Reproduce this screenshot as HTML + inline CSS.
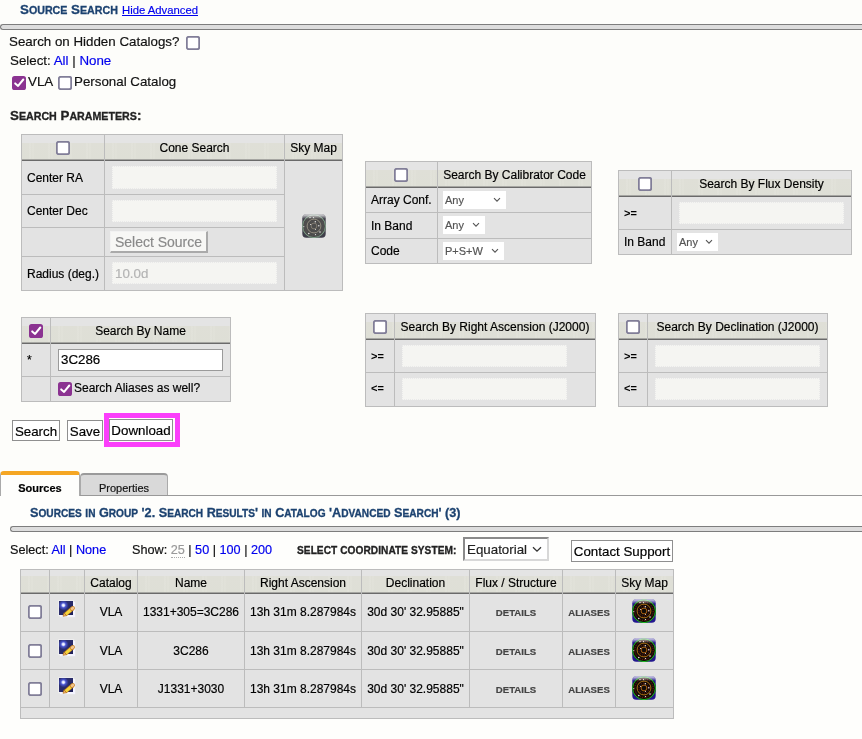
<!DOCTYPE html>
<html>
<head>
<meta charset="utf-8">
<title>Source Search</title>
<style>
html,body{margin:0;padding:0;}
body{width:862px;height:739px;overflow:hidden;background:#fdfdfa;font-family:"Liberation Sans",Arial,Helvetica,sans-serif;font-size:13.33px;color:#111;position:relative;-webkit-text-stroke:0.18px;}
a{color:#0000ee;text-decoration:none;}
.abs{position:absolute;white-space:nowrap;}
.sc{font-weight:bold;-webkit-text-stroke:0.3px;}
.sc small{font-size:80%;}
.h1{color:#1c4270;font-size:13.33px;}
.hr{position:absolute;height:4px;border:1px solid #7d7d7d;background:#dddddd;border-radius:4px 0 0 4px;border-right:none;}
.cb{position:absolute;box-sizing:border-box;width:14px;height:14px;border:1.6px solid #817e98;border-radius:2.6px;background:#fff;}
.cb.on{background:#8b3391;border:none;}
.cb.on svg{position:absolute;left:0;top:0;}
table.t{position:absolute;border-collapse:separate;border-spacing:0;table-layout:fixed;font-size:12px;border-top:1px solid #bcbcbc;border-left:1px solid #bcbcbc;color:#000;}
table.t td,table.t th{box-sizing:border-box;border-right:1px solid #bcbcbc;border-bottom:1px solid #bcbcbc;padding:0;font-weight:normal;background:#e3e3e3;position:relative;overflow:visible;white-space:nowrap;}
table.t th{height:26px;padding-top:1px;padding-bottom:2px;border-bottom:none;text-align:center;background:linear-gradient(to top,#6a6a6a 0,#6a6a6a 1px,#a6a6a2 1px,#a6a6a2 2px,rgba(0,0,0,0) 2px),repeating-linear-gradient(90deg,rgba(255,255,255,0) 0,rgba(255,255,255,0) 7px,rgba(255,255,255,.16) 8px,rgba(255,255,255,0) 9px,rgba(255,255,255,0) 10px,rgba(255,255,255,.12) 11px,rgba(255,255,255,0) 12px,rgba(255,255,255,0) 19px) 0 100%/100% 18px no-repeat,linear-gradient(to top,#dedfd6 0,#dfdfd7 18px,#e4e4e4 18px);}
table.t tr.rh th{height:24px;padding-top:4px;}
table.t td.l{text-align:left;padding-left:5px;}
table.t td.c{text-align:center;padding-bottom:2px;}
table.t tr.r1 td.c,table.t tr.r2 td.c{padding-bottom:0;}
table.t tr.r1 td.lk,table.t tr.r2 td.lk{padding-top:2px;}
table.t td.op{font-weight:bold;font-size:11px;padding-left:5px;padding-bottom:1px;-webkit-text-stroke:0;}
table.t td.op2{padding-bottom:3px;}
table.t td.lk{text-align:center;font-weight:bold;font-size:9.6px;color:#444;}
.in{position:absolute;box-sizing:border-box;border:1px dotted #e9e9e9;background:#f5f5f2;height:22px;}
.sel{position:absolute;box-sizing:border-box;background:#fff;font-size:11px;line-height:18px;height:18px;color:#555;padding-left:2px;}
.sel svg{position:absolute;right:5px;top:6px;}
.btn{position:absolute;box-sizing:border-box;border:1px solid #8f8f8f;background:#fff;color:#000;font-size:13.33px;text-align:center;height:21px;line-height:21px;}
.tab{position:absolute;box-sizing:border-box;font-size:11px;text-align:center;}
</style>
</head>
<body>
<div id="w" style="position:absolute;left:0;top:0;width:862px;height:739px;will-change:transform;">

<div class="abs sc h1" style="left:20px;top:2px;">S<small>OURCE</small> S<small>EARCH</small></div>
<a class="abs" style="left:122px;top:4px;font-size:11.3px;text-decoration:underline;">Hide Advanced</a>
<div class="hr" style="left:0;top:24px;width:862px;"></div>
<div class="abs" style="left:9px;top:34px;">Search on Hidden Catalogs?</div>
<svg class="abs" style="left:186px;top:36px;" width="14" height="14" viewBox="0 0 14 14"><rect x="0.8" y="0.8" width="12.4" height="12.4" rx="2" fill="#fff" stroke="#817e98" stroke-width="1.9"/></svg>
<div class="abs" style="left:10px;top:53px;">Select: <a>All</a> | <a>None</a></div>
<span class="cb on" style="left:12px;top:76px;"><svg width="14" height="14" viewBox="0 0 14 14"><path d="M3.2 7.4 L6.1 9.9 L11.3 3.5" fill="none" stroke="#fff" stroke-width="2" stroke-linecap="round" stroke-linejoin="round"/></svg></span>
<div class="abs" style="left:28px;top:74px;">VLA</div>
<svg class="abs" style="left:58px;top:76px;" width="14" height="14" viewBox="0 0 14 14"><rect x="0.8" y="0.8" width="12.4" height="12.4" rx="2" fill="#fff" stroke="#817e98" stroke-width="1.9"/></svg>
<div class="abs" style="left:74px;top:74px;">Personal Catalog</div>
<div class="abs sc" style="left:10px;top:108px;color:#222;">S<small>EARCH</small> P<small>ARAMETERS</small>:</div>
<table class="t" style="left:21px;top:134px;width:322px;">
<colgroup><col style="width:83px"><col style="width:180px"><col style="width:58px"></colgroup>
<tr><th></th><th>Cone Search</th><th>Sky Map</th></tr>
<tr style="height:34px"><td class="l">Center RA</td><td></td><td rowspan="4"></td></tr>
<tr style="height:33px"><td class="l">Center Dec</td><td></td></tr>
<tr style="height:29px"><td></td><td></td></tr>
<tr style="height:34px"><td class="l">Radius (deg.)</td><td></td></tr>
</table>
<svg class="abs" style="left:56px;top:141px;" width="14" height="14" viewBox="0 0 14 14"><rect x="0.8" y="0.8" width="12.4" height="12.4" rx="2" fill="#fff" stroke="#817e98" stroke-width="1.9"/></svg>
<span class="in" style="left:112px;top:166px;width:165px;height:23px;"></span>
<span class="in" style="left:112px;top:200px;width:165px;height:22px;"></span>
<span class="in" style="left:112px;top:262px;width:165px;height:22px;"></span>
<div class="abs" style="left:115px;top:266px;font-size:13.33px;color:#b4b4b4;">10.0d</div>
<div class="abs" style="left:110px;top:231px;box-sizing:border-box;width:98px;height:22px;background:#f7f7f5;border:1px solid #f2f2f2;border-right:2px solid #aaa;border-bottom:2px solid #aaa;font-size:14px;line-height:20px;color:#8a8a8a;text-align:center;">Select Source</div>
<svg class="abs" style="left:302px;top:214px;" width="24" height="24" viewBox="0 0 24 24"><defs><linearGradient id="ga" x1="0" y1="0" x2="0" y2="1"><stop offset="0" stop-color="#fff" stop-opacity=".85"/><stop offset=".07" stop-color="#fff" stop-opacity=".55"/><stop offset=".2" stop-color="#fff" stop-opacity="0"/></linearGradient></defs><rect x="0.3" y="0.3" width="23.4" height="23.4" rx="4" fill="#3f3e4a"/><circle cx="12" cy="12.2" r="11.8" fill="#4c4c4c"/><circle cx="12" cy="12.2" r="9.2" fill="none" stroke="#5a5555" stroke-width="1" stroke-dasharray="1 1.2" opacity=".8"/><circle cx="12" cy="12.2" r="5" fill="none" stroke="#5a5555" stroke-width="1" stroke-dasharray="1 1.2" opacity=".7"/><circle cx="12" cy="12.2" r="11.45" fill="none" stroke="#86ad91" stroke-width=".9"/><circle cx="12" cy="12" r="6.9" fill="none" stroke="#a39c8c" stroke-width=".8"/><circle cx="12" cy="12" r="2.9" fill="none" stroke="#8c8578" stroke-width=".8"/><circle cx="8" cy="3.5" r="0.7" fill="#e8e8e8"/><circle cx="11.5" cy="3.6" r="0.7" fill="#e8e8e8"/><circle cx="13.3" cy="7.7" r="0.7" fill="#e8e8e8"/><circle cx="8.6" cy="10.5" r="0.6" fill="#e8e8e8"/><circle cx="1.8" cy="12.6" r="0.6" fill="#e8e8e8"/><circle cx="16.8" cy="11.8" r="0.7" fill="#e8e8e8"/><circle cx="13.5" cy="15.6" r="0.5" fill="#e8e8e8"/><circle cx="18" cy="18" r="0.8" fill="#e8e8e8"/><circle cx="6.8" cy="19.5" r="0.8" fill="#e8e8e8"/><circle cx="13.5" cy="20.6" r="0.6" fill="#e8e8e8"/><rect x="0.3" y="0.3" width="23.4" height="23.4" rx="4" fill="url(#ga)"/></svg>
<table class="t" style="left:365px;top:161px;width:227px;">
<colgroup><col style="width:72px"><col style="width:154px"></colgroup>
<tr><th></th><th>Search By Calibrator Code</th></tr>
<tr style="height:25px"><td class="l">Array Conf.</td><td></td></tr>
<tr style="height:26px"><td class="l">In Band</td><td></td></tr>
<tr style="height:25px"><td class="l">Code</td><td></td></tr>
</table>
<svg class="abs" style="left:394px;top:168px;" width="14" height="14" viewBox="0 0 14 14"><rect x="0.8" y="0.8" width="12.4" height="12.4" rx="2" fill="#fff" stroke="#817e98" stroke-width="1.9"/></svg>
<span class="sel" style="left:443px;top:191px;width:63px;">Any<svg width="8" height="6" viewBox="0 0 8 6"><path d="M1 1.2 L4 4.2 L7 1.2" fill="none" stroke="#555" stroke-width="1.1"/></svg></span>
<span class="sel" style="left:443px;top:216px;width:42px;">Any<svg width="8" height="6" viewBox="0 0 8 6"><path d="M1 1.2 L4 4.2 L7 1.2" fill="none" stroke="#555" stroke-width="1.1"/></svg></span>
<span class="sel" style="left:443px;top:242px;width:61px;">P+S+W<svg width="8" height="6" viewBox="0 0 8 6"><path d="M1 1.2 L4 4.2 L7 1.2" fill="none" stroke="#555" stroke-width="1.1"/></svg></span>
<table class="t" style="left:618px;top:170px;width:234px;">
<colgroup><col style="width:53px"><col style="width:180px"></colgroup>
<tr><th></th><th>Search By Flux Density</th></tr>
<tr style="height:33px"><td class="op">&gt;=</td><td></td></tr>
<tr style="height:25px"><td class="l">In Band</td><td></td></tr>
</table>
<svg class="abs" style="left:638px;top:177px;" width="14" height="14" viewBox="0 0 14 14"><rect x="0.8" y="0.8" width="12.4" height="12.4" rx="2" fill="#fff" stroke="#817e98" stroke-width="1.9"/></svg>
<span class="in" style="left:679px;top:202px;width:165px;height:22px;"></span>
<span class="sel" style="left:677px;top:233px;width:41px;">Any<svg width="8" height="6" viewBox="0 0 8 6"><path d="M1 1.2 L4 4.2 L7 1.2" fill="none" stroke="#555" stroke-width="1.1"/></svg></span>
<table class="t" style="left:21px;top:317px;width:210px;">
<colgroup><col style="width:29px"><col style="width:180px"></colgroup>
<tr><th></th><th>Search By Name</th></tr>
<tr style="height:33px"><td class="l">*</td><td></td></tr>
<tr style="height:25px"><td></td><td></td></tr>
</table>
<span class="cb on" style="left:29px;top:324px;"><svg width="14" height="14" viewBox="0 0 14 14"><path d="M3.2 7.4 L6.1 9.9 L11.3 3.5" fill="none" stroke="#fff" stroke-width="2" stroke-linecap="round" stroke-linejoin="round"/></svg></span>
<div class="abs" style="left:58px;top:349px;box-sizing:border-box;width:165px;height:22px;border:1px solid #9a9a9a;background:#fff;font-size:13.33px;line-height:20px;padding-left:2px;color:#000;">3C286</div>
<span class="cb on" style="left:58px;top:382px;"><svg width="14" height="14" viewBox="0 0 14 14"><path d="M3.2 7.4 L6.1 9.9 L11.3 3.5" fill="none" stroke="#fff" stroke-width="2" stroke-linecap="round" stroke-linejoin="round"/></svg></span>
<div class="abs" style="left:74px;top:381px;font-size:12px;color:#000;">Search Aliases as well?</div>
<table class="t" style="left:365px;top:313px;width:231px;">
<colgroup><col style="width:29px"><col style="width:201px"></colgroup>
<tr><th></th><th>Search By Right Ascension (J2000)</th></tr>
<tr style="height:33px"><td class="op">&gt;=</td><td></td></tr>
<tr style="height:34px"><td class="op op2">&lt;=</td><td></td></tr>
</table>
<svg class="abs" style="left:373px;top:320px;" width="14" height="14" viewBox="0 0 14 14"><rect x="0.8" y="0.8" width="12.4" height="12.4" rx="2" fill="#fff" stroke="#817e98" stroke-width="1.9"/></svg>
<span class="in" style="left:402px;top:345px;width:165px;height:22px;"></span>
<span class="in" style="left:402px;top:378px;width:165px;height:22px;"></span>
<table class="t" style="left:618px;top:313px;width:210px;">
<colgroup><col style="width:29px"><col style="width:180px"></colgroup>
<tr><th></th><th>Search By Declination (J2000)</th></tr>
<tr style="height:33px"><td class="op">&gt;=</td><td></td></tr>
<tr style="height:34px"><td class="op op2">&lt;=</td><td></td></tr>
</table>
<svg class="abs" style="left:626px;top:320px;" width="14" height="14" viewBox="0 0 14 14"><rect x="0.8" y="0.8" width="12.4" height="12.4" rx="2" fill="#fff" stroke="#817e98" stroke-width="1.9"/></svg>
<span class="in" style="left:655px;top:345px;width:165px;height:22px;"></span>
<span class="in" style="left:655px;top:378px;width:165px;height:22px;"></span>
<div class="abs" style="left:104px;top:413px;box-sizing:border-box;width:76px;height:34px;border:5px solid #fb3ffb;"></div>
<div class="btn" style="left:12px;top:420px;width:48px;">Search</div>
<div class="btn" style="left:67px;top:420px;width:36px;">Save</div>
<div class="btn" style="left:109px;top:419px;width:64px;height:22px;line-height:21px;">Download</div>
<div class="abs" style="left:0;top:496px;width:862px;height:243px;background:#fefefc;"></div>
<div class="abs" style="left:0;top:495px;width:862px;height:1px;background:#999;"></div>
<div class="tab" style="left:0;top:471px;width:80px;height:25px;border-top:4px solid #f5a623;border-left:1px solid #aaa;border-right:1px solid #aaa;border-radius:4px 4px 0 0;background:#fefefc;font-weight:bold;line-height:26px;color:#000;">Sources</div>
<div class="tab" style="left:80px;top:473px;width:88px;height:22px;border-top:2px solid #9a9a9a;border-left:1px solid #aaa;border-right:1px solid #aaa;border-radius:4px 4px 0 0;background:#d9d9d9;line-height:26px;color:#111;">Properties</div>
<div class="abs sc h1" style="left:30px;top:506px;font-size:12.67px;">S<small>OURCES</small> <small>IN</small> G<small>ROUP</small> '2. S<small>EARCH</small> R<small>ESULTS</small>' <small>IN</small> C<small>ATALOG</small> 'A<small>DVANCED</small> S<small>EARCH</small>' (3)</div>
<div class="hr" style="left:10px;top:526px;width:852px;"></div>
<div class="abs" style="left:10px;top:543px;font-size:12.67px;">Select: <a>All</a> | <a>None</a></div>
<div class="abs" style="left:132px;top:543px;font-size:12.67px;">Show: <span style="color:#999;border-bottom:1px dotted #aaa;">25</span> | <a>50</a> | <a>100</a> | <a>200</a></div>
<div class="abs sc" style="left:297px;top:545px;font-size:10.13px;color:#222;letter-spacing:.06px;">SELECT COORDINATE SYSTEM:</div>
<div class="abs" style="left:463px;top:537px;box-sizing:border-box;width:86px;height:24px;border:2px solid;border-color:#8a8a8a #d8d8d8 #d8d8d8 #8a8a8a;background:#fff;font-size:13.33px;line-height:21px;padding-left:2px;color:#222;">Equatorial<svg style="position:absolute;right:5px;top:7px" width="10" height="7" viewBox="0 0 10 7"><path d="M1 1.2 L5 5.2 L9 1.2" fill="none" stroke="#333" stroke-width="1.3"/></svg></div>
<div class="btn" style="left:571px;top:540px;width:102px;height:22px;line-height:22px;">Contact Support</div>
<table class="t" style="left:20px;top:569px;width:654px;">
<colgroup><col style="width:29px"><col style="width:35px"><col style="width:53px"><col style="width:107px"><col style="width:117px"><col style="width:108px"><col style="width:93px"><col style="width:53px"><col style="width:58px"></colgroup>
<tr class="rh"><th></th><th></th><th>Catalog</th><th>Name</th><th>Right Ascension</th><th>Declination</th><th>Flux / Structure</th><th></th><th>Sky Map</th></tr>
<tr style="height:38px" class="r0"><td></td><td></td><td class="c">VLA</td><td class="c">1331+305=3C286</td><td class="c">13h 31m 8.287984s</td><td class="c">30d 30' 32.95885"</td><td class="lk">DETAILS</td><td class="lk">ALIASES</td><td></td></tr>
<tr style="height:38px" class="r1"><td></td><td></td><td class="c">VLA</td><td class="c">3C286</td><td class="c">13h 31m 8.287984s</td><td class="c">30d 30' 32.95885"</td><td class="lk">DETAILS</td><td class="lk">ALIASES</td><td></td></tr>
<tr style="height:38px" class="r2"><td></td><td></td><td class="c">VLA</td><td class="c">J1331+3030</td><td class="c">13h 31m 8.287984s</td><td class="c">30d 30' 32.95885"</td><td class="lk">DETAILS</td><td class="lk">ALIASES</td><td></td></tr>
<tr style="height:11px"><td colspan="9"></td></tr>
</table>
<svg class="abs" style="left:28px;top:605px;" width="14" height="14" viewBox="0 0 14 14"><rect x="0.8" y="0.8" width="12.4" height="12.4" rx="2" fill="#fff" stroke="#817e98" stroke-width="1.9"/></svg>
<svg class="abs" style="left:58px;top:600px;" width="19" height="19" viewBox="0 0 19 19"><defs><radialGradient id="eg" cx="5.4" cy="5.3" r="5" gradientUnits="userSpaceOnUse"><stop offset="0" stop-color="#fff"/><stop offset=".22" stop-color="#dfe4ff"/><stop offset=".5" stop-color="#4a55d0"/><stop offset="1" stop-color="#2b2e70"/></radialGradient><linearGradient id="eb" x1="0" y1="0" x2="1" y2="1"><stop offset="0" stop-color="#34377a"/><stop offset="1" stop-color="#1e2058"/></linearGradient></defs><rect x="0.2" y="0.2" width="16" height="16" fill="#efeff0"/><rect x="2" y="2" width="15.2" height="15.2" fill="#f4f4ff"/><rect x="1" y="1" width="14" height="14" fill="url(#eb)"/><rect x="1" y="1" width="9.5" height="9.5" fill="url(#eg)"/><path d="M7.2 14.6 L14.9 8.15" stroke="#b9791a" stroke-width="4" stroke-linecap="butt"/><path d="M7.6 14.3 L13.8 9.05" stroke="#f5d53c" stroke-width="2.9" stroke-linecap="butt"/><path d="M5 16.3 L6 12.9 L8.6 15.7 Z" fill="#eeb070" stroke="#b9791a" stroke-width=".7" stroke-linejoin="round"/><path d="M14.0 8.85 L14.9 8.1" stroke="#c98528" stroke-width="4.1" stroke-linecap="round"/><path d="M14.1 8.75 L14.8 8.2" stroke="#f4c58c" stroke-width="2.8" stroke-linecap="round"/></svg>
<svg class="abs" style="left:632px;top:599px;" width="24" height="24" viewBox="0 0 24 24"><defs><linearGradient id="gb" x1="0" y1="0" x2="0" y2="1"><stop offset="0" stop-color="#fff" stop-opacity=".85"/><stop offset=".07" stop-color="#fff" stop-opacity=".55"/><stop offset=".2" stop-color="#fff" stop-opacity="0"/></linearGradient></defs><rect x="0.3" y="0.3" width="23.4" height="23.4" rx="4" fill="#23188f"/><circle cx="12" cy="12.2" r="11.8" fill="#120c08"/><circle cx="12" cy="12.2" r="9.2" fill="none" stroke="#a81c10" stroke-width="1" stroke-dasharray="1 1.2" opacity=".8"/><circle cx="12" cy="12.2" r="5" fill="none" stroke="#a81c10" stroke-width="1" stroke-dasharray="1 1.2" opacity=".7"/><circle cx="12" cy="12.2" r="11.45" fill="none" stroke="#1fd825" stroke-width=".9"/><circle cx="12" cy="12" r="6.9" fill="none" stroke="#d08414" stroke-width=".8"/><circle cx="12" cy="12" r="2.9" fill="none" stroke="#d07414" stroke-width=".8"/><circle cx="8" cy="3.5" r="0.7" fill="#f4eaea"/><circle cx="11.5" cy="3.6" r="0.7" fill="#f4eaea"/><circle cx="13.3" cy="7.7" r="0.7" fill="#f4eaea"/><circle cx="8.6" cy="10.5" r="0.6" fill="#f4eaea"/><circle cx="1.8" cy="12.6" r="0.6" fill="#f4eaea"/><circle cx="16.8" cy="11.8" r="0.7" fill="#f4eaea"/><circle cx="13.5" cy="15.6" r="0.5" fill="#f4eaea"/><circle cx="18" cy="18" r="0.8" fill="#f4eaea"/><circle cx="6.8" cy="19.5" r="0.8" fill="#f4eaea"/><circle cx="13.5" cy="20.6" r="0.6" fill="#f4eaea"/><rect x="0.3" y="0.3" width="23.4" height="23.4" rx="4" fill="url(#gb)"/></svg>
<svg class="abs" style="left:28px;top:644px;" width="14" height="14" viewBox="0 0 14 14"><rect x="0.8" y="0.8" width="12.4" height="12.4" rx="2" fill="#fff" stroke="#817e98" stroke-width="1.9"/></svg>
<svg class="abs" style="left:58px;top:639px;" width="19" height="19" viewBox="0 0 19 19"><defs><radialGradient id="eg" cx="5.4" cy="5.3" r="5" gradientUnits="userSpaceOnUse"><stop offset="0" stop-color="#fff"/><stop offset=".22" stop-color="#dfe4ff"/><stop offset=".5" stop-color="#4a55d0"/><stop offset="1" stop-color="#2b2e70"/></radialGradient><linearGradient id="eb" x1="0" y1="0" x2="1" y2="1"><stop offset="0" stop-color="#34377a"/><stop offset="1" stop-color="#1e2058"/></linearGradient></defs><rect x="0.2" y="0.2" width="16" height="16" fill="#efeff0"/><rect x="2" y="2" width="15.2" height="15.2" fill="#f4f4ff"/><rect x="1" y="1" width="14" height="14" fill="url(#eb)"/><rect x="1" y="1" width="9.5" height="9.5" fill="url(#eg)"/><path d="M7.2 14.6 L14.9 8.15" stroke="#b9791a" stroke-width="4" stroke-linecap="butt"/><path d="M7.6 14.3 L13.8 9.05" stroke="#f5d53c" stroke-width="2.9" stroke-linecap="butt"/><path d="M5 16.3 L6 12.9 L8.6 15.7 Z" fill="#eeb070" stroke="#b9791a" stroke-width=".7" stroke-linejoin="round"/><path d="M14.0 8.85 L14.9 8.1" stroke="#c98528" stroke-width="4.1" stroke-linecap="round"/><path d="M14.1 8.75 L14.8 8.2" stroke="#f4c58c" stroke-width="2.8" stroke-linecap="round"/></svg>
<svg class="abs" style="left:632px;top:638px;" width="24" height="24" viewBox="0 0 24 24"><defs><linearGradient id="gb" x1="0" y1="0" x2="0" y2="1"><stop offset="0" stop-color="#fff" stop-opacity=".85"/><stop offset=".07" stop-color="#fff" stop-opacity=".55"/><stop offset=".2" stop-color="#fff" stop-opacity="0"/></linearGradient></defs><rect x="0.3" y="0.3" width="23.4" height="23.4" rx="4" fill="#23188f"/><circle cx="12" cy="12.2" r="11.8" fill="#120c08"/><circle cx="12" cy="12.2" r="9.2" fill="none" stroke="#a81c10" stroke-width="1" stroke-dasharray="1 1.2" opacity=".8"/><circle cx="12" cy="12.2" r="5" fill="none" stroke="#a81c10" stroke-width="1" stroke-dasharray="1 1.2" opacity=".7"/><circle cx="12" cy="12.2" r="11.45" fill="none" stroke="#1fd825" stroke-width=".9"/><circle cx="12" cy="12" r="6.9" fill="none" stroke="#d08414" stroke-width=".8"/><circle cx="12" cy="12" r="2.9" fill="none" stroke="#d07414" stroke-width=".8"/><circle cx="8" cy="3.5" r="0.7" fill="#f4eaea"/><circle cx="11.5" cy="3.6" r="0.7" fill="#f4eaea"/><circle cx="13.3" cy="7.7" r="0.7" fill="#f4eaea"/><circle cx="8.6" cy="10.5" r="0.6" fill="#f4eaea"/><circle cx="1.8" cy="12.6" r="0.6" fill="#f4eaea"/><circle cx="16.8" cy="11.8" r="0.7" fill="#f4eaea"/><circle cx="13.5" cy="15.6" r="0.5" fill="#f4eaea"/><circle cx="18" cy="18" r="0.8" fill="#f4eaea"/><circle cx="6.8" cy="19.5" r="0.8" fill="#f4eaea"/><circle cx="13.5" cy="20.6" r="0.6" fill="#f4eaea"/><rect x="0.3" y="0.3" width="23.4" height="23.4" rx="4" fill="url(#gb)"/></svg>
<svg class="abs" style="left:28px;top:682px;" width="14" height="14" viewBox="0 0 14 14"><rect x="0.8" y="0.8" width="12.4" height="12.4" rx="2" fill="#fff" stroke="#817e98" stroke-width="1.9"/></svg>
<svg class="abs" style="left:58px;top:677px;" width="19" height="19" viewBox="0 0 19 19"><defs><radialGradient id="eg" cx="5.4" cy="5.3" r="5" gradientUnits="userSpaceOnUse"><stop offset="0" stop-color="#fff"/><stop offset=".22" stop-color="#dfe4ff"/><stop offset=".5" stop-color="#4a55d0"/><stop offset="1" stop-color="#2b2e70"/></radialGradient><linearGradient id="eb" x1="0" y1="0" x2="1" y2="1"><stop offset="0" stop-color="#34377a"/><stop offset="1" stop-color="#1e2058"/></linearGradient></defs><rect x="0.2" y="0.2" width="16" height="16" fill="#efeff0"/><rect x="2" y="2" width="15.2" height="15.2" fill="#f4f4ff"/><rect x="1" y="1" width="14" height="14" fill="url(#eb)"/><rect x="1" y="1" width="9.5" height="9.5" fill="url(#eg)"/><path d="M7.2 14.6 L14.9 8.15" stroke="#b9791a" stroke-width="4" stroke-linecap="butt"/><path d="M7.6 14.3 L13.8 9.05" stroke="#f5d53c" stroke-width="2.9" stroke-linecap="butt"/><path d="M5 16.3 L6 12.9 L8.6 15.7 Z" fill="#eeb070" stroke="#b9791a" stroke-width=".7" stroke-linejoin="round"/><path d="M14.0 8.85 L14.9 8.1" stroke="#c98528" stroke-width="4.1" stroke-linecap="round"/><path d="M14.1 8.75 L14.8 8.2" stroke="#f4c58c" stroke-width="2.8" stroke-linecap="round"/></svg>
<svg class="abs" style="left:632px;top:676px;" width="24" height="24" viewBox="0 0 24 24"><defs><linearGradient id="gb" x1="0" y1="0" x2="0" y2="1"><stop offset="0" stop-color="#fff" stop-opacity=".85"/><stop offset=".07" stop-color="#fff" stop-opacity=".55"/><stop offset=".2" stop-color="#fff" stop-opacity="0"/></linearGradient></defs><rect x="0.3" y="0.3" width="23.4" height="23.4" rx="4" fill="#23188f"/><circle cx="12" cy="12.2" r="11.8" fill="#120c08"/><circle cx="12" cy="12.2" r="9.2" fill="none" stroke="#a81c10" stroke-width="1" stroke-dasharray="1 1.2" opacity=".8"/><circle cx="12" cy="12.2" r="5" fill="none" stroke="#a81c10" stroke-width="1" stroke-dasharray="1 1.2" opacity=".7"/><circle cx="12" cy="12.2" r="11.45" fill="none" stroke="#1fd825" stroke-width=".9"/><circle cx="12" cy="12" r="6.9" fill="none" stroke="#d08414" stroke-width=".8"/><circle cx="12" cy="12" r="2.9" fill="none" stroke="#d07414" stroke-width=".8"/><circle cx="8" cy="3.5" r="0.7" fill="#f4eaea"/><circle cx="11.5" cy="3.6" r="0.7" fill="#f4eaea"/><circle cx="13.3" cy="7.7" r="0.7" fill="#f4eaea"/><circle cx="8.6" cy="10.5" r="0.6" fill="#f4eaea"/><circle cx="1.8" cy="12.6" r="0.6" fill="#f4eaea"/><circle cx="16.8" cy="11.8" r="0.7" fill="#f4eaea"/><circle cx="13.5" cy="15.6" r="0.5" fill="#f4eaea"/><circle cx="18" cy="18" r="0.8" fill="#f4eaea"/><circle cx="6.8" cy="19.5" r="0.8" fill="#f4eaea"/><circle cx="13.5" cy="20.6" r="0.6" fill="#f4eaea"/><rect x="0.3" y="0.3" width="23.4" height="23.4" rx="4" fill="url(#gb)"/></svg>
</div>
</body>
</html>
